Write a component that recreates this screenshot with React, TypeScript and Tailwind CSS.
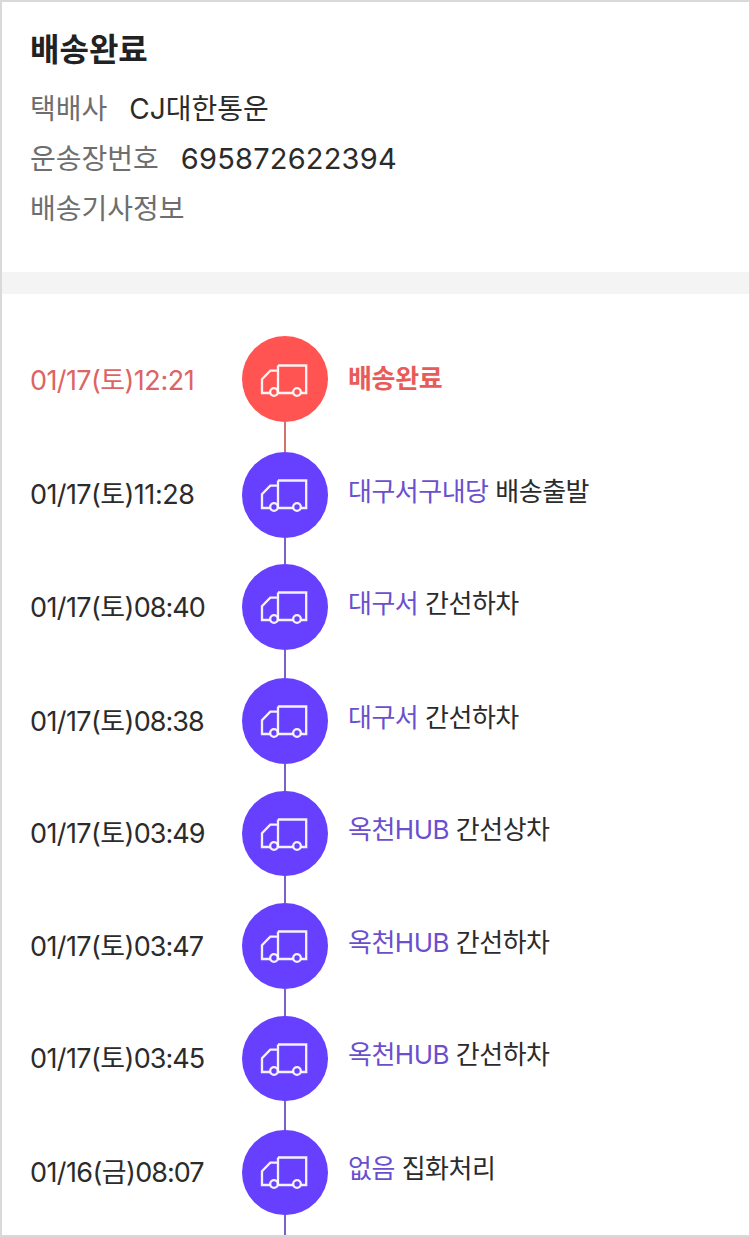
import clsx from "clsx";

type TrackingStep = {
  date: string;
  time: string;
  place?: string;
  status: string;
  done?: boolean;
  height: number;
};

const steps: TrackingStep[] = [
  { date: "01/17(토)", time: "12:21", status: "배송완료", done: true, height: 116 },
  { date: "01/17(토)", time: "11:28", place: "대구서구내당", status: "배송출발", height: 112.4 },
  { date: "01/17(토)", time: "08:40", place: "대구서", status: "간선하차", height: 114 },
  { date: "01/17(토)", time: "08:38", place: "대구서", status: "간선하차", height: 112.4 },
  { date: "01/17(토)", time: "03:49", place: "옥천HUB", status: "간선상차", height: 112.6 },
  { date: "01/17(토)", time: "03:47", place: "옥천HUB", status: "간선하차", height: 112.6 },
  { date: "01/17(토)", time: "03:45", place: "옥천HUB", status: "간선하차", height: 113.6 },
  { date: "01/16(금)", time: "08:07", place: "없음", status: "집화처리", height: 114 },
];

function TruckIcon() {
  return (
    <svg viewBox="0 0 48 33" className="mr-[2px] h-[33px] w-12" fill="none" stroke="#fff" strokeOpacity="0.93" strokeWidth="2.3">
      <path d="M18 1.5h28.2V29H41M33 29H18M10 29H2V15.2l8.3-8.5H18M18 29V1.5" />
      <circle cx="14" cy="28" r="3.8" />
      <circle cx="37" cy="28" r="3.8" />
    </svg>
  );
}

function StepRow({ step }: { step: TrackingStep }) {
  return (
    <li className="flex shrink-0" style={{ height: step.height }}>
      <div className="flex h-[85px] w-[212px] items-center">
        <p
          className={clsx(
            "text-[27px] whitespace-nowrap",
            step.done ? "pt-[5px] text-[#dc6464]" : "pt-[2px] text-[#2b2b2b]"
          )}
        >
          <span className="tracking-[-0.6px]">{step.date}</span>
          <span className={step.time.startsWith("1") ? "tracking-[-0.4px]" : "tracking-[-1px]"}>{step.time}</span>
        </p>
      </div>
      <div className="flex w-[86px] flex-col items-center">
        <div
          className={clsx(
            "flex h-[85.5px] w-[86px] shrink-0 items-center justify-center rounded-full",
            step.done ? "bg-[#ff5452] pt-[3px]" : "bg-[#6740ff] pt-px"
          )}
        >
          <TruckIcon />
        </div>
        <div className={clsx("w-[2px] flex-1", step.done ? "bg-[#d5716f]" : "bg-[#7c61c4]")} />
      </div>
      <div className="flex h-[85px] items-center pl-[20px]">
        {step.done ? (
          <strong className="text-[26px] font-bold tracking-[-0.35px] text-[#e95b58]">{step.status}</strong>
        ) : (
          <p className="pb-[7px] text-[26px] tracking-[-0.5px] whitespace-nowrap text-[#2b2b2b]">
            <span className="text-[#6a4fcf]">{step.place}</span> {step.status}
          </p>
        )}
      </div>
    </li>
  );
}

export default function App() {
  return (
    <main className="flex h-[1237px] w-[750px] flex-col overflow-hidden border-2 border-r border-[#d9d9d9] bg-white font-['Inter','Noto_Sans_CJK_KR',sans-serif]">
      <header className="h-[270px] shrink-0 px-7 pt-[26px] text-[28px] text-[#6e6e6e]">
        <h1 className="mb-3 text-[32px] leading-[44px] font-bold text-[#222]">배송완료</h1>
        <dl className="leading-[50px]">
          <div className="flex gap-[22px]">
            <dt>택배사</dt>
            <dd className="text-[#2b2b2b]">CJ대한통운</dd>
          </div>
          <div className="flex gap-[22px]">
            <dt>운송장번호</dt>
            <dd className="text-[29px] tracking-[0.2px] text-[#2b2b2b]">695872622394</dd>
          </div>
          <div className="flex">
            <dt>배송기사정보</dt>
          </div>
        </dl>
      </header>

      <div className="h-[22px] shrink-0 bg-[#f4f4f4]" />

      <ol className="flex flex-col pt-[42px] pl-7">
        {steps.map((step) => (
          <StepRow key={step.date + step.time} step={step} />
        ))}
      </ol>
    </main>
  );
}
